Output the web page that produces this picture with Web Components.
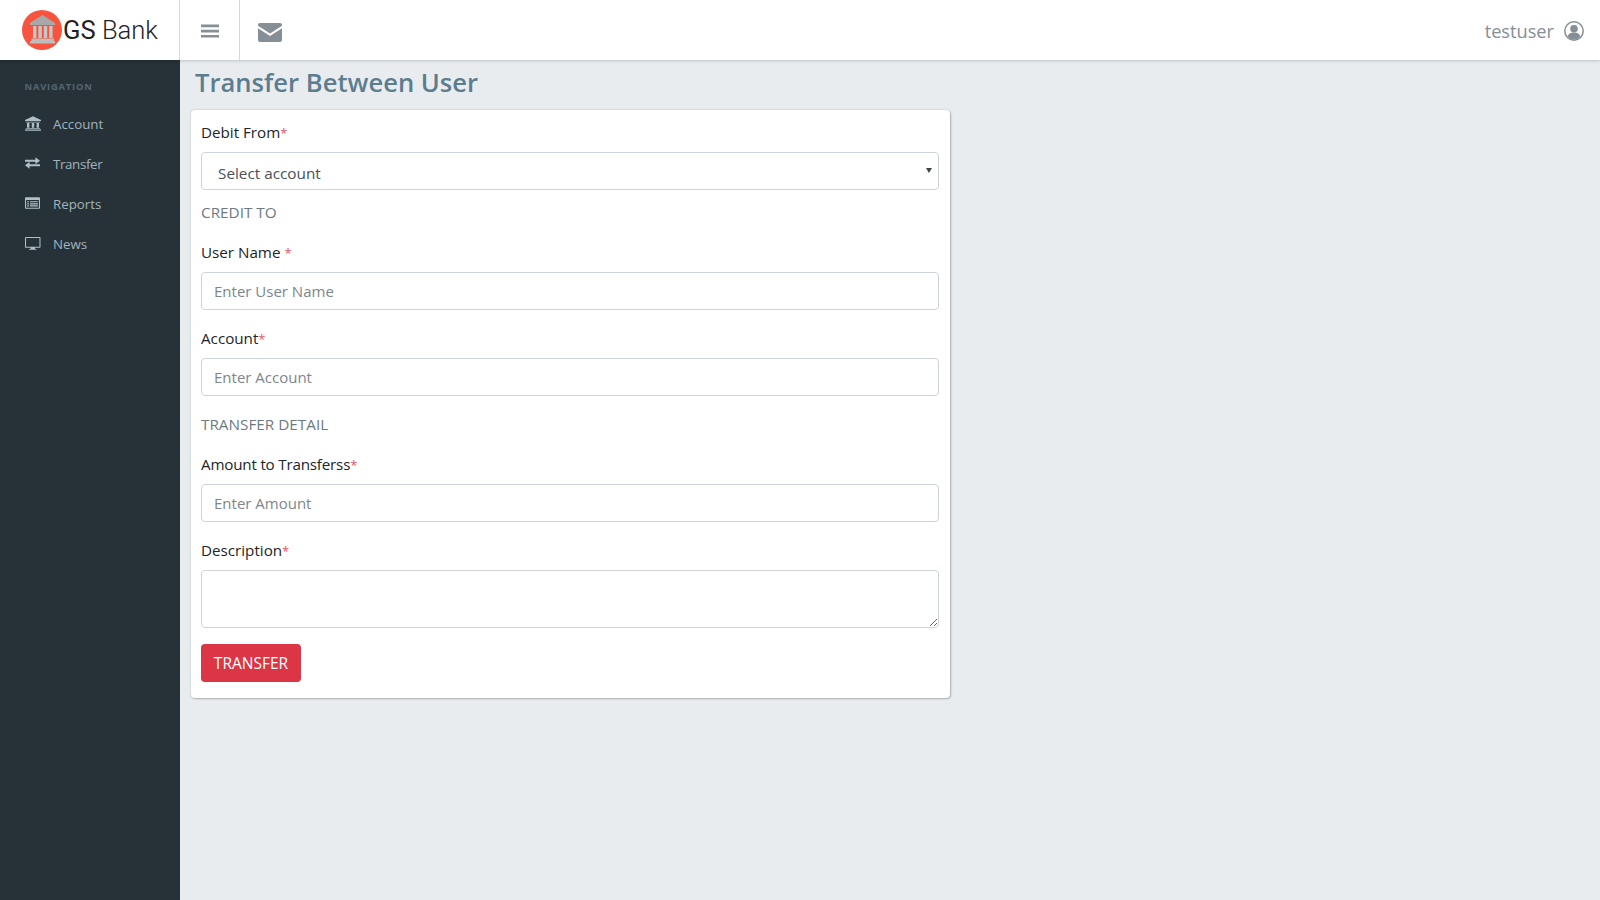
<!DOCTYPE html>
<html lang="en">
<head>
<meta charset="utf-8">
<title>GS Bank</title>
<style>
html,body{margin:0;height:100%;overflow:hidden}
body{font-family:"Open Sans","Noto Sans",sans-serif;background:#e9ecef}
</style>
</head>
<body>
<bank-app></bank-app>
<script>
function el(name, css, html, init){
  customElements.define(name, class extends HTMLElement{
    constructor(){super();const r=this.attachShadow({mode:'open'});r.innerHTML='<style>'+css+'</style>'+(typeof html==='function'?html(this):html);}
    connectedCallback(){ if(init) init(this); }
  });
}
const ICONS={
 bank:'<svg viewBox="0 0 20 18" width="16" height="15"><path fill="currentColor" d="M10 0 20 4.500V6H0V4.500zM1 6.800h18v.9H1zM2.500 8.300h3v6h-3zM8.500 8.300h3v6h-3zM14.500 8.300h3v6h-3zM1 14.800h18V16H1zM0 16.500h20V18H0z"/></svg>',
 swap:'<svg viewBox="0 0 18 14" width="15" height="12"><path fill="currentColor" d="M0 3.200h12.500V0L18 4.400l-5.500 4.200V5.600H0zM18 8.600v2.300H5.500V14L0 9.700l5.500-4.100v3z" /></svg>',
 list:'<svg viewBox="0 0 18 14" width="15" height="12"><path fill="currentColor" fill-rule="evenodd" d="M1 0h16a1 1 0 0 1 1 1v12a1 1 0 0 1-1 1H1a1 1 0 0 1-1-1V1a1 1 0 0 1 1-1zm.3 3.300v9.400h15.400V3.300zM2.600 4.800h2.200v1.400H2.600zm3.400 0h9.400v1.400H6zM2.600 7.300h2.200v1.400H2.600zm3.400 0h9.400v1.400H6zM2.600 9.800h2.200v1.400H2.600zm3.400 0h9.400v1.400H6z"/></svg>',
 desk:'<svg viewBox="0 0 18 15" width="15.500" height="13"><path fill="currentColor" fill-rule="evenodd" d="M1 0h16a1 1 0 0 1 1 1v10.500a1 1 0 0 1-1 1h-5.600l.4 1.400h1.400v1H4.800v-1h1.400l.4-1.400H1a1 1 0 0 1-1-1V1a1 1 0 0 1 1-1zm.2 1.200v10.100h15.600V1.200z"/></svg>'
};
el('brand-logo',`:host{display:flex;align-items:center;width:180px;height:60px;box-sizing:border-box;padding-left:22px;flex:none}
 svg{display:block;flex:none}
 span{font:300 25.600px/1 Roboto,sans-serif;color:#1f2326;margin-left:1px;white-space:nowrap;position:relative;top:1px}
 b{font-weight:400}`,
 `<svg width="40" height="40" viewBox="0 0 40 40"><circle cx="20" cy="20" r="20" fill="#f6543f"/>
  <path fill="#a8a8a8" d="M20.500 5 33 13V15H8V13z"/>
  <path fill="#c6c6c6" d="M11 16h3.400v12H11zM16.400 16h3.400v12h-3.400zM21.800 16h3.400v12h-3.400zM27.200 16h3.400v12h-3.400z"/>
  <path fill="#bdbdbd" d="M9.500 28.500h22.500V31H9.500zM8 31h25v2.500H8z"/></svg><span><b>GS</b> Bank</span>`);
el('top-bar',`:host{display:flex;align-items:stretch;height:60px;background:#fff;box-shadow:0 1px 3px rgba(0,0,0,.18);position:relative;z-index:2}
 .btn{width:60px;box-sizing:border-box;border-left:1px solid #d5d7d9;display:flex;align-items:center;justify-content:center;color:#868e96;padding-top:4px}
 .btn.b{width:60px;margin-left:-1px;padding-top:2px}
 .sp{flex:1}
 .user{display:flex;align-items:center;gap:10px;padding:2px 16px 0 0;color:#868e96;font-size:18.200px}
 svg{display:block}`,
 `<brand-logo></brand-logo>
  <div class="btn b"><svg width="18" height="14" viewBox="0 0 18 14"><path fill="currentColor" d="M0 .5h18v2.700H0zM0 5.700h18v2.700H0zM0 10.900h18v2.700H0z"/></svg></div>
  <div class="btn"><svg width="24" height="19" viewBox="0 0 24 19"><path fill="currentColor" d="M2 0h20a2 2 0 0 1 2 2v.8L12 10.500 0 2.800V2a2 2 0 0 1 2-2zM0 5.200l12 7.800 12-7.800V17a2 2 0 0 1-2 2H2a2 2 0 0 1-2-2z"/></svg></div>
  <div class="sp"></div>
  <div class="user"><span>testuser</span><svg width="20" height="20" viewBox="0 0 20 20"><circle cx="10" cy="10" r="9.200" fill="none" stroke="currentColor" stroke-width="1.500"/><circle cx="10" cy="7.800" r="3.800" fill="currentColor"/><path fill="currentColor" d="M3.700 15.500c.6-2.800 2.800-4 6.300-4s5.700 1.200 6.300 4A8 8 0 0 1 10 18.500a8 8 0 0 1-6.300-3z"/></svg></div>`);
el('nav-item',`:host{display:flex;align-items:center;height:40px;box-sizing:border-box;padding-left:25px;color:#a3b3bc;font-size:13.300px}
 .i{width:28px;flex:none;display:flex;align-items:center;color:#b0bec5;margin-top:-2px}
 svg{display:block}`,
 t=>`<span class="i">${ICONS[t.getAttribute('icon')]}</span><slot></slot>`);
el('side-bar',`:host{display:block;width:180px;flex:none;background:#263238;box-sizing:border-box;padding-top:19px}
 .h{font-size:9.300px;line-height:16px;font-weight:700;letter-spacing:.85px;color:#566570;padding-left:24.500px;margin-bottom:9px}`,
 `<div class="h">NAVIGATION</div><slot></slot>`);
const fieldCss=`:host{display:block;margin-bottom:16px;font-size:15.200px;color:#212529}
 label{display:block;line-height:24px;height:24px;margin-bottom:8px}
 i{font-style:normal;color:#e8546a;font-size:13px;line-height:0}
 input,textarea,select{display:block;width:100%;box-sizing:border-box;font:inherit;font-size:15px;border:1px solid #ced4da;border-radius:4px;background:#fff;color:#495057;outline:none;margin:0}
 input,select{height:38px;padding:0 12px}
 textarea{height:58px;padding:6px 12px}
 select{appearance:none;-webkit-appearance:none;padding:4px 12px 0 16px;font-size:15.300px}
 ::placeholder{color:#7d868d;opacity:1}
 .w{position:relative}
 .w::after{content:"";position:absolute;right:7px;top:16px;border:3.500px solid transparent;border-top:5px solid #3e4448;border-bottom:0}`;
el('form-field',fieldCss,t=>{
  const l=t.getAttribute('label'),s=t.getAttribute('gap')!==null?' ':'',k=t.getAttribute('kind')||'input',p=t.getAttribute('placeholder')||'';
  const c=k==='select'?`<div class="w"><select><option>${p}</option></select></div>`:k==='textarea'?'<textarea></textarea>':`<input placeholder="${p}">`;
  return `<label>${l}${s}<i>*</i></label>${c}`;
});
el('section-label',`:host{display:block;line-height:24px;font-size:15.300px;color:#6c7a83;margin-bottom:16px}`,`<slot></slot>`);
el('red-button',`:host{display:block}
 button{display:block;height:38px;width:100px;padding:0;border:0;border-radius:4px;background:#dc3545;color:#fff;font:inherit;font-size:15.500px}`,
 `<button><slot></slot></button>`);
el('form-card',`:host{display:block;width:759px;box-sizing:border-box;margin-left:11px;background:#fff;border-radius:4px;padding:10px 11px 16px 10px;box-shadow:1px 1px 2px rgba(0,0,0,.22),0 0 2px rgba(0,0,0,.2)}`,`<slot></slot>`);
el('bank-app',`:host{display:flex;flex-direction:column;height:900px}
 .r{display:flex;flex:1;min-height:0}
 main{flex:1;min-width:0}
 h1{margin:0 0 6px 15px;padding-top:2px;font-size:25.600px;line-height:42px;font-weight:600;color:#5c7d8f}
 `,
 `<top-bar></top-bar><div class="r">
  <side-bar>
   <nav-item icon="bank">Account</nav-item><nav-item icon="swap" style="letter-spacing:-.35px">Transfer</nav-item><nav-item icon="list">Reports</nav-item><nav-item icon="desk">News</nav-item>
  </side-bar>
  <main><h1>Transfer Between User</h1>
   <form-card>
    <form-field label="Debit From" kind="select" placeholder="Select account" style="margin-bottom:10px"></form-field>
    <section-label>CREDIT TO</section-label>
    <form-field label="User Name" gap placeholder="Enter User Name"></form-field>
    <form-field label="Account" placeholder="Enter Account"></form-field>
    <section-label>TRANSFER DETAIL</section-label>
    <form-field label="Amount to Transferss" placeholder="Enter Amount" style="letter-spacing:-.2px"></form-field>
    <form-field label="Description" kind="textarea"></form-field>
    <red-button>TRANSFER</red-button>
   </form-card>
  </main></div>`);
</script>
</body>
</html>
